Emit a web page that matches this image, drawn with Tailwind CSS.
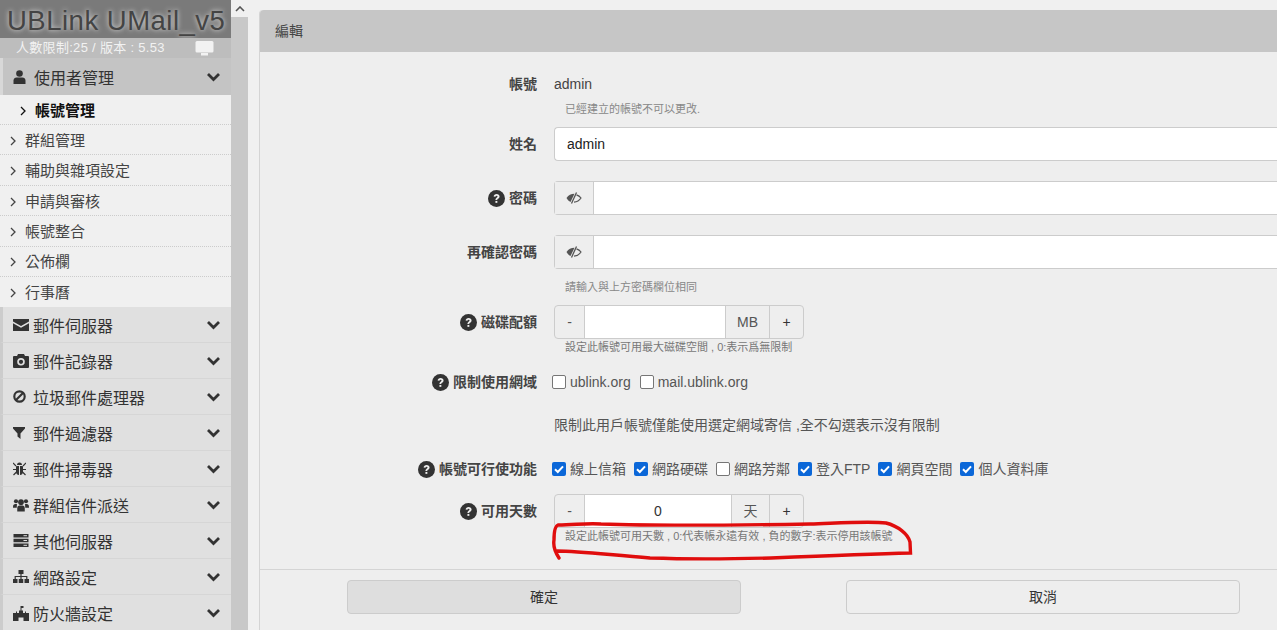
<!DOCTYPE html>
<html lang="en">
<head>
  <meta charset="UTF-8" />
  <title>UMail</title>
  <script src="https://cdn.jsdelivr.net/npm/@tailwindcss/browser@4"></script>
</head>
<body class="h-[630px] overflow-hidden bg-[#f0f0f0] text-[14px] text-[#444] font-['Liberation_Sans','Noto_Sans_CJK_TC',sans-serif]">
  <svg class="hidden">
    <symbol id="chev" viewBox="0 0 14 10"><path d="M1.500 2 7 7.500 12.500 2" fill="none" stroke="currentColor" stroke-width="2.800"/></symbol>
    <symbol id="gt" viewBox="0 0 6 10"><path d="M1 1l4 4-4 4" fill="none" stroke="currentColor" stroke-width="1.300"/></symbol>
    <symbol id="help" viewBox="0 0 16 16"><circle cx="8" cy="8" r="8" fill="currentColor"/><path d="M5.300 6.200C5.400 4.600 6.600 3.700 8.100 3.700c1.600 0 2.800 1 2.800 2.300 0 1.200-.8 1.700-1.500 2.200-.5.3-.7.6-.7 1.100H7c0-1 .4-1.600 1.100-2.100.5-.4.9-.6.9-1.100 0-.5-.4-.8-.9-.8-.6 0-1 .4-1.100 1z" fill="#eee"/><rect x="7" y="10.300" width="1.800" height="1.800" fill="#eee"/></symbol>
    <symbol id="eye" viewBox="0 0 16 12"><path d="M.5 6C2.500 3 5 1.800 8.500 1.800L4.500 10C3 9.300 1.500 8 .5 6z" fill="currentColor"/><path d="M10.500 2.900C12.300 3.500 14 4.700 15 6c-1.500 2.300-4 4-7 4.200" fill="none" stroke="currentColor" stroke-width="1.200"/><path d="M10.500.5 5.500 11.500" stroke="currentColor" stroke-width="1.300"/></symbol>
    <symbol id="check" viewBox="0 0 14 14"><path d="M3 7.300 5.800 10 11 4.300" fill="none" stroke="#fff" stroke-width="2"/></symbol>
  </svg>

  <div class="flex h-full">
    <!-- sidebar -->
    <aside class="w-[231px] shrink-0 bg-[#f0f0f0]">
      <div class="h-[38px] bg-[#7a7a7a] pl-[7px] text-[27.500px] leading-[41px] tracking-[0.5px] text-[#444] [text-shadow:0_0_5px_#e5e5e5] whitespace-nowrap overflow-hidden">UBLink UMail_v5</div>
      <div class="flex h-[20px] items-center justify-between bg-[#bdbdbd] pl-[16px] pr-[17px] text-[13px] tracking-[0.3px] text-[#f2f2f2]">
        <span>人數限制:25 / 版本 : 5.53</span>
        <svg class="h-[15px] w-[19px]" viewBox="0 0 19 15"><rect x="0.500" width="18" height="11.500" rx="1.500" fill="#f2f2f2"/><rect x="6" y="12" width="7" height="2.500" fill="#f2f2f2"/></svg>
      </div>
      <div class="flex h-[37px] items-center border-l-[3px] border-[#d8d8d8] bg-[#c4c4c4] pl-[10px] pr-[10px] text-[16px] text-[#333]">
        <svg class="mr-[8px] h-[14px] w-[13px] text-[#333]" viewBox="0 0 13 14"><circle cx="6.500" cy="3.500" r="3.300" fill="currentColor"/><path d="M0.500 14V10.500C.5 8.500 2 7.500 3.500 7.500h6c1.500 0 3 1 3 3V14z" fill="currentColor"/></svg>
        <span class="pt-[4px]">使用者管理</span>
        <svg class="ml-auto h-[10px] w-[15px] text-[#333]"><use href="#chev"/></svg>
      </div>
      <div class="flex h-[30px] items-center border-b border-dotted border-[#ccc] pl-[20px] pt-[3px] text-[15px] font-bold text-[#111]">
        <svg class="mr-[9px] h-[10px] w-[6px]"><use href="#gt"/></svg>帳號管理
      </div>
      <div class="flex h-[30.400px] items-center border-b border-dotted border-[#ccc] pl-[10px] pt-[3px] text-[15px]"><svg class="mr-[9px] h-[10px] w-[6px]"><use href="#gt"/></svg>群組管理</div>
      <div class="flex h-[30.400px] items-center border-b border-dotted border-[#ccc] pl-[10px] pt-[2px] text-[15px]"><svg class="mr-[9px] h-[10px] w-[6px]"><use href="#gt"/></svg>輔助與雜項設定</div>
      <div class="flex h-[30.400px] items-center border-b border-dotted border-[#ccc] pl-[10px] pt-[3px] text-[15px]"><svg class="mr-[9px] h-[10px] w-[6px]"><use href="#gt"/></svg>申請與審核</div>
      <div class="flex h-[30.400px] items-center border-b border-dotted border-[#ccc] pl-[10px] pt-[2px] text-[15px]"><svg class="mr-[9px] h-[10px] w-[6px]"><use href="#gt"/></svg>帳號整合</div>
      <div class="flex h-[30.400px] items-center border-b border-dotted border-[#ccc] pl-[10px] pt-[2px] text-[15px]"><svg class="mr-[9px] h-[10px] w-[6px]"><use href="#gt"/></svg>公佈欄</div>
      <div class="flex h-[30.400px] items-center pl-[10px] pt-[2px] text-[15px]"><svg class="mr-[9px] h-[10px] w-[6px]"><use href="#gt"/></svg>行事曆</div>

      <div class="flex h-[36px] items-center border-b border-l-[3px] border-b-[#d6d6d6] border-l-[#ccc] bg-[#e0e0e0] pl-[10px] pr-[10px] text-[16px] text-[#333]">
        <svg class="mr-[4px] h-[14px] w-[16px]" viewBox="0 0 16 14"><path d="M0 1h16v2.500L8 8 0 3.500zM0 5.200 8 9.700l8-4.500V13H0z" fill="currentColor"/></svg><span class="pt-[4px]">郵件伺服器</span>
        <svg class="ml-auto h-[10px] w-[15px]"><use href="#chev"/></svg>
      </div>
      <div class="flex h-[36px] items-center border-b border-l-[3px] border-b-[#d6d6d6] border-l-[#ccc] bg-[#e0e0e0] pl-[10px] pr-[10px] text-[16px] text-[#333]">
        <svg class="mr-[4px] h-[14px] w-[16px]" viewBox="0 0 16 14"><path fill-rule="evenodd" d="M5 0h6l1 2h3a1 1 0 0 1 1 1v10a1 1 0 0 1-1 1H1a1 1 0 0 1-1-1V3a1 1 0 0 1 1-1h3zM8 4a3.800 3.800 0 1 0 0 7.600A3.800 3.800 0 0 0 8 4zm0 1.700a2.100 2.100 0 1 1 0 4.200 2.100 2.100 0 0 1 0-4.200z" fill="currentColor"/></svg><span class="pt-[4px]">郵件記錄器</span>
        <svg class="ml-auto h-[10px] w-[15px]"><use href="#chev"/></svg>
      </div>
      <div class="flex h-[36px] items-center border-b border-l-[3px] border-b-[#d6d6d6] border-l-[#ccc] bg-[#e0e0e0] pl-[10px] pr-[10px] text-[16px] text-[#333]">
        <svg class="mr-[7px] h-[13px] w-[13px]" viewBox="0 0 12 12"><circle cx="6" cy="6" r="4.800" fill="none" stroke="currentColor" stroke-width="2"/><path d="M2.800 9.200 9.200 2.800" stroke="currentColor" stroke-width="2"/></svg><span class="pt-[4px]">垃圾郵件處理器</span>
        <svg class="ml-auto h-[10px] w-[15px]"><use href="#chev"/></svg>
      </div>
      <div class="flex h-[36px] items-center border-b border-l-[3px] border-b-[#d6d6d6] border-l-[#ccc] bg-[#e0e0e0] pl-[10px] pr-[10px] text-[16px] text-[#333]">
        <svg class="mr-[8px] h-[12px] w-[12px]" viewBox="0 0 12 12"><path d="M0 0h12v1.500L7.500 6.500V12l-3-2.500V6.500L0 1.500z" fill="currentColor"/></svg><span class="pt-[4px]">郵件過濾器</span>
        <svg class="ml-auto h-[10px] w-[15px]"><use href="#chev"/></svg>
      </div>
      <div class="flex h-[36px] items-center border-b border-l-[3px] border-b-[#d6d6d6] border-l-[#ccc] bg-[#e0e0e0] pl-[10px] pr-[10px] text-[16px] text-[#333]">
        <svg class="mr-[7px] h-[14px] w-[13px]" viewBox="0 0 13 14"><path d="M4 3a2.500 2.500 0 0 1 5 0zM3.500 4H6v9C4 13 3 11.500 3 10V4.500zM7 4h2.500l.5.500V10c0 1.500-1 3-3 3z" fill="currentColor"/><path d="M0 1l3 3M13 1l-3 3M0 7.500h3M13 7.500h-3M.5 13l3-3M12.500 13l-3-3" stroke="currentColor" stroke-width="1.200"/></svg><span class="pt-[4px]">郵件掃毒器</span>
        <svg class="ml-auto h-[10px] w-[15px]"><use href="#chev"/></svg>
      </div>
      <div class="flex h-[36px] items-center border-b border-l-[3px] border-b-[#d6d6d6] border-l-[#ccc] bg-[#e0e0e0] pl-[10px] pr-[10px] text-[16px] text-[#333]">
        <svg class="mr-[4px] h-[14px] w-[16px]" viewBox="0 0 17 14"><circle cx="3.200" cy="3" r="2.200" fill="currentColor"/><circle cx="13.800" cy="3" r="2.200" fill="currentColor"/><circle cx="8.500" cy="4" r="3" fill="currentColor"/><path d="M0 9c0-2 1-3 2.500-3h1.700L4 10H0zM17 9c0-2-1-3-2.500-3h-1.700l.2 4H17zM4.500 14v-3.500C4.500 8.500 5.500 7.500 7 7.500h3c1.500 0 2.500 1 2.500 3V14z" fill="currentColor"/></svg><span class="pt-[4px]">群組信件派送</span>
        <svg class="ml-auto h-[10px] w-[15px]"><use href="#chev"/></svg>
      </div>
      <div class="flex h-[36px] items-center border-b border-l-[3px] border-b-[#d6d6d6] border-l-[#ccc] bg-[#e0e0e0] pl-[10px] pr-[10px] text-[16px] text-[#333]">
        <svg class="mr-[4px] h-[13px] w-[16px]" viewBox="0 0 15 13"><path d="M0 0h15v3.400H0zM0 4.800h15v3.400H0zM0 9.600h15V13H0z" fill="currentColor"/><path d="M10 1.700h3.500M10 6.500h3.500M10 11.300h3.500" stroke="#ddd"/></svg><span class="pt-[4px]">其他伺服器</span>
        <svg class="ml-auto h-[10px] w-[15px]"><use href="#chev"/></svg>
      </div>
      <div class="flex h-[36px] items-center border-b border-l-[3px] border-b-[#d6d6d6] border-l-[#ccc] bg-[#e0e0e0] pl-[10px] pr-[10px] text-[16px] text-[#333]">
        <svg class="mr-[4px] h-[13px] w-[16px]" viewBox="0 0 16 13"><path d="M5.500 0h5v4h-5zM0 9h4.500v4H0zM5.750 9h4.500v4h-4.500zM11.500 9H16v4h-4.500z" fill="currentColor"/><path d="M2.200 9V6.500h11.600V9M8 4v5" fill="none" stroke="currentColor" stroke-width="1.200"/></svg><span class="pt-[4px]">網路設定</span>
        <svg class="ml-auto h-[10px] w-[15px]"><use href="#chev"/></svg>
      </div>
      <div class="flex h-[36px] items-center border-l-[3px] border-l-[#ccc] bg-[#e0e0e0] pl-[10px] pr-[10px] text-[16px] text-[#333]">
        <svg class="mr-[4px] h-[15px] w-[16px]" viewBox="0 0 16 15"><path d="M7.500 0h3v2h-2v2.500H10V7h2V5.500h1V7h3v8h-5.500v-3.500h-5V15H0V7h3V5.500h1V7h2V4.500h1.500z" fill="currentColor"/></svg><span class="pt-[4px]">防火牆設定</span>
        <svg class="ml-auto h-[10px] w-[15px]"><use href="#chev"/></svg>
      </div>
    </aside>

    <!-- sidebar scroll column -->
    <div class="w-[17px] shrink-0 bg-[#c8c8c8]">
      <div class="flex h-[17px] items-center justify-center bg-[#f0f0f0]">
        <svg class="h-[6px] w-[10px] text-[#555]" viewBox="0 0 10 6"><path d="M1 5l4-4 4 4" fill="none" stroke="currentColor" stroke-width="1.600"/></svg>
      </div>
    </div>

    <!-- main panel -->
    <main class="ml-[11px] mt-[10px] min-w-0 flex-1 rounded-tl-[4px] border-l border-[#d4d4d4] bg-[#eee]">
      <div class="flex h-[42px] items-center rounded-tl-[4px] bg-[#c6c6c6] pl-[15px] text-[14px] text-[#444]">編輯</div>

      <div class="h-[518px] border-b border-[#d4d4d4] pt-[22px]">
        <div class="flex h-[20px] items-center">
          <div class="w-[277px] shrink-0 text-right font-bold text-[#444]">帳號</div>
          <div class="ml-[17px] text-[#444]">admin</div>
        </div>
        <p class="ml-[305px] mt-[7px] h-[16px] text-[11px] leading-[16px] text-[#888]">已經建立的帳號不可以更改.</p>

        <div class="mt-[10px] flex h-[34px] items-center">
          <div class="w-[277px] shrink-0 text-right font-bold text-[#444]">姓名</div>
          <div class="ml-[17px] flex h-[34px] flex-1 items-center rounded-l-[4px] border-y border-l border-[#ccc] bg-white pl-[12px] text-[#222]">admin</div>
        </div>

        <div class="mt-[20px] flex h-[34px] items-center">
          <div class="flex w-[277px] shrink-0 items-center justify-end gap-[4px] font-bold text-[#444]"><svg class="h-[17px] w-[17px] text-[#333]"><use href="#help"/></svg>密碼</div>
          <div class="ml-[17px] flex h-[34px] flex-1 rounded-l-[4px] border-y border-l border-[#ccc]">
            <div class="flex w-[39px] items-center justify-center border-r border-[#ccc] bg-[#eee]"><svg class="h-[12px] w-[16px] text-[#555]"><use href="#eye"/></svg></div>
            <div class="flex-1 bg-white"></div>
          </div>
        </div>

        <div class="mt-[20px] flex h-[34px] items-center">
          <div class="w-[277px] shrink-0 text-right font-bold text-[#444]">再確認密碼</div>
          <div class="ml-[17px] flex h-[34px] flex-1 rounded-l-[4px] border-y border-l border-[#ccc]">
            <div class="flex w-[39px] items-center justify-center border-r border-[#ccc] bg-[#eee]"><svg class="h-[12px] w-[16px] text-[#555]"><use href="#eye"/></svg></div>
            <div class="flex-1 bg-white"></div>
          </div>
        </div>
        <p class="ml-[305px] mt-[10px] h-[16px] text-[11px] leading-[16px] text-[#888]">請輸入與上方密碼欄位相同</p>

        <div class="mt-[10px] flex h-[34px] items-center">
          <div class="flex w-[277px] shrink-0 items-center justify-end gap-[4px] font-bold text-[#444]"><svg class="h-[17px] w-[17px] text-[#333]"><use href="#help"/></svg>磁碟配額</div>
          <div class="ml-[17px] flex h-[34px] w-[250px] rounded-[4px] border border-[#ccc] text-[#555]">
            <div class="flex w-[30px] items-center justify-center border-r border-[#ccc]">-</div>
            <div class="w-[140px] bg-white"></div>
            <div class="flex w-[45px] items-center justify-center border-x border-[#ccc]">MB</div>
            <div class="flex flex-1 items-center justify-center text-[#333]">+</div>
          </div>
        </div>
        <p class="ml-[305px] h-[16px] text-[11px] leading-[16px] text-[#777]">設定此帳號可用最大磁碟空間 , 0:表示爲無限制</p>

        <div class="mt-[15px] flex h-[24px] items-center">
          <div class="flex w-[277px] shrink-0 items-center justify-end gap-[4px] font-bold text-[#444]"><svg class="h-[17px] w-[17px] text-[#333]"><use href="#help"/></svg>限制使用網域</div>
          <div class="ml-[15px] flex items-center gap-[9px] text-[#555]">
            <label class="flex items-center gap-[4px]"><span class="h-[14px] w-[14px] rounded-[2px] border border-[#767676] bg-white"></span>ublink.org</label>
            <label class="flex items-center gap-[4px]"><span class="h-[14px] w-[14px] rounded-[2px] border border-[#767676] bg-white"></span>mail.ublink.org</label>
          </div>
        </div>
        <p class="ml-[294px] mt-[21px] h-[20px] leading-[20px] text-[#555]">限制此用戶帳號僅能使用選定網域寄信 ,全不勾選表示沒有限制</p>

        <div class="mt-[22px] flex h-[24px] items-center">
          <div class="flex w-[277px] shrink-0 items-center justify-end gap-[4px] font-bold text-[#444]"><svg class="h-[17px] w-[17px] text-[#333]"><use href="#help"/></svg>帳號可行使功能</div>
          <div class="ml-[15px] flex items-center gap-[8px] text-[#555]">
            <label class="flex items-center gap-[4px]"><svg class="h-[14px] w-[14px] rounded-[2px] bg-[#0b67d8]"><use href="#check"/></svg>線上信箱</label>
            <label class="flex items-center gap-[4px]"><svg class="h-[14px] w-[14px] rounded-[2px] bg-[#0b67d8]"><use href="#check"/></svg>網路硬碟</label>
            <label class="flex items-center gap-[4px]"><span class="h-[14px] w-[14px] rounded-[2px] border border-[#767676] bg-white"></span>網路芳鄰</label>
            <label class="flex items-center gap-[4px]"><svg class="h-[14px] w-[14px] rounded-[2px] bg-[#0b67d8]"><use href="#check"/></svg>登入FTP</label>
            <label class="flex items-center gap-[4px]"><svg class="h-[14px] w-[14px] rounded-[2px] bg-[#0b67d8]"><use href="#check"/></svg>網頁空間</label>
            <label class="flex items-center gap-[4px]"><svg class="h-[14px] w-[14px] rounded-[2px] bg-[#0b67d8]"><use href="#check"/></svg>個人資料庫</label>
          </div>
        </div>

        <div class="mt-[13px] flex h-[34px] items-center">
          <div class="flex w-[277px] shrink-0 items-center justify-end gap-[4px] font-bold text-[#444]"><svg class="h-[17px] w-[17px] text-[#333]"><use href="#help"/></svg>可用天數</div>
          <div class="ml-[17px] flex h-[34px] w-[250px] rounded-[4px] border border-[#ccc] text-[#555]">
            <div class="flex w-[30px] items-center justify-center border-r border-[#ccc]">-</div>
            <div class="flex w-[146px] items-center justify-center bg-white text-[#333]">0</div>
            <div class="flex w-[39px] items-center justify-center border-x border-[#ccc]">天</div>
            <div class="flex flex-1 items-center justify-center text-[#333]">+</div>
          </div>
        </div>
        <p class="ml-[305px] h-[16px] text-[11px] leading-[16px] text-[#777]">設定此帳號可用天數 , 0:代表帳永遠有效 , 負的數字:表示停用該帳號</p>
      </div>

      <div class="flex h-[60px] pl-[87px] pt-[10px]">
        <div class="flex h-[34px] w-[394px] items-center justify-center rounded-[4px] border border-[#ccc] bg-[#dedede] text-[#333]">確定</div>
        <div class="ml-[105px] flex h-[34px] w-[394px] items-center justify-center rounded-[4px] border border-[#ccc] text-[#333]">取消</div>
      </div>
    </main>
  </div>

  <!-- hand drawn red mark over the form -->
  <svg class="absolute left-[550px] top-[518px] h-[45px] w-[365px]" viewBox="0 0 365 45" fill="none">
    <path d="M9 40C5 34 3 28 4 22 4 14 5 8 8 7 25 7 35 5 51 6c59 2 149 1 209 0 30-1 60-3 76-1 12 3 22 11 24 19l.5 11C320 36 270 38 221 40c-41 1-91 1-121 0C60 37 30 33 7 33" stroke="#e00d0d" stroke-width="3.400" stroke-linecap="round"/>
  </svg>
</body>
</html>
